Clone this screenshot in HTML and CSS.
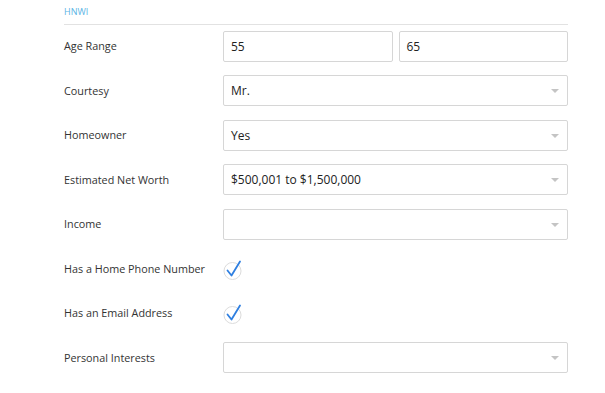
FILE: index.html
```html
<!DOCTYPE html>
<html lang="en">
<head>
    <meta charset="UTF-8">
    <title>HNWI</title>
    <link rel="stylesheet" href="styles.css">
</head>
<body>
    <div class="section">
        <div class="section-title">HNWI</div>

        <div class="row">
            <div class="label">Age Range</div>
            <div class="field pair">
                <div class="box">55</div>
                <div class="box">65</div>
            </div>
        </div>

        <div class="row">
            <div class="label">Courtesy</div>
            <div class="field"><div class="box select">Mr.</div></div>
        </div>

        <div class="row">
            <div class="label">Homeowner</div>
            <div class="field"><div class="box select">Yes</div></div>
        </div>

        <div class="row">
            <div class="label">Estimated Net Worth</div>
            <div class="field"><div class="box select">$500,001 to $1,500,000</div></div>
        </div>

        <div class="row">
            <div class="label">Income</div>
            <div class="field"><div class="box select"></div></div>
        </div>

        <div class="row">
            <div class="label">Has a Home Phone Number</div>
            <div class="field">
                <span class="check">
                    <svg width="22" height="22" viewBox="0 0 22 22">
                        <circle cx="9.5" cy="12" r="8.5" fill="none" stroke="#dcdcdc" stroke-width="1"/>
                        <path d="M4.5 11.5 L8.5 16.5 L17 2.5" fill="none" stroke="#2f7fe0" stroke-width="1.8" stroke-linecap="round" stroke-linejoin="round"/>
                    </svg>
                </span>
            </div>
        </div>

        <div class="row">
            <div class="label">Has an Email Address</div>
            <div class="field">
                <span class="check">
                    <svg width="22" height="22" viewBox="0 0 22 22">
                        <circle cx="9.5" cy="12" r="8.5" fill="none" stroke="#dcdcdc" stroke-width="1"/>
                        <path d="M4.5 11.5 L8.5 16.5 L17 2.5" fill="none" stroke="#2f7fe0" stroke-width="1.8" stroke-linecap="round" stroke-linejoin="round"/>
                    </svg>
                </span>
            </div>
        </div>

        <div class="row">
            <div class="label">Personal Interests</div>
            <div class="field"><div class="box select"></div></div>
        </div>
    </div>
</body>
</html>
```

FILE: styles.css
```css
* {
    margin: 0;
    padding: 0;
    box-sizing: border-box;
}

body {
    font-family: 'Open Sans', 'Noto Sans', sans-serif;
    background: #fff;
    color: #333;
    width: 605px;
    height: 393px;
    overflow: hidden;
}

.section {
    margin-left: 64px;
    width: 504px;
    padding-top: 6px;
}

.section-title {
    font-size: 9px;
    line-height: 12px;
    color: #5ab4e5;
    padding-bottom: 6px;
    border-bottom: 1px solid #e2e2e2;
    margin-bottom: -1px;
}

.row {
    display: flex;
    align-items: center;
    height: 44.5px;
}

.label {
    width: 159px;
    font-size: 10.8px;
    color: #333;
    margin-top: -1px;
}

.field {
    flex: 1;
    display: flex;
}

.pair {
    gap: 6px;
}

.box {
    flex: 1;
    height: 31px;
    border: 1px solid #d6d6d6;
    border-radius: 2px;
    padding: 0 7px;
    display: flex;
    align-items: center;
    font-size: 12px;
    color: #222;
    position: relative;
}

.select::after {
    content: '';
    position: absolute;
    right: 8px;
    top: 13px;
    border-left: 4px solid transparent;
    border-right: 4px solid transparent;
    border-top: 4px solid #c4c4c4;
}

.check {
    display: flex;
    margin-top: 2px;
}
```
